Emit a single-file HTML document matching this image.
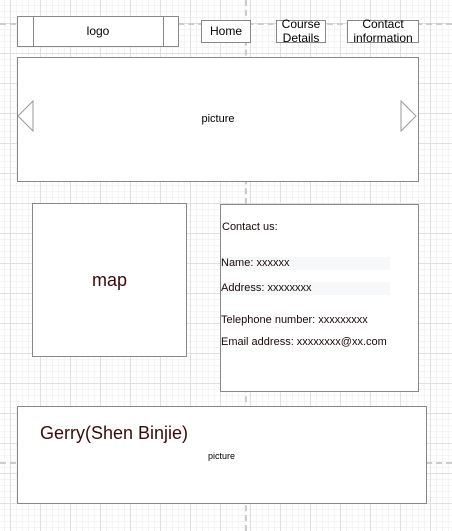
<!DOCTYPE html>
<html><head><style>
body{margin:0;width:452px;height:531px;overflow:hidden;position:relative;font-family:"Liberation Sans",Arial,sans-serif;
background-color:#fff;
background-image:
linear-gradient(to right,#e0e0e0 1px,transparent 1px),
linear-gradient(to bottom,#e0e0e0 1px,transparent 1px),
linear-gradient(to right,#f4f4f4 1px,transparent 1px),
linear-gradient(to bottom,#f4f4f4 1px,transparent 1px);
background-size:30px 30px,30px 30px,6px 6px,6px 6px;
background-position:10px 0,0 23px,4px 0,0 5px;}
.b{position:absolute;background:#fff;border:1px solid #888;box-sizing:border-box;color:#000;text-align:center;}
.dh{position:absolute;left:0;width:452px;height:0;border-top:2px dashed #ccc;}
.dv{position:absolute;top:0;height:531px;width:0;border-left:2px dashed #ccc;left:245px;}
</style></head><body>
<div class="dh" style="top:23px"></div>
<div class="dh" style="top:462px"></div>
<div class="dv"></div>
<div class="b" style="left:17px;top:16px;width:162px;height:31px;font-size:12px;line-height:29px;">logo
<div style="position:absolute;left:15px;top:0;height:29px;border-left:1px solid #888"></div>
<div style="position:absolute;left:145px;top:0;height:29px;border-left:1px solid #888"></div></div>
<div class="b" style="left:201px;top:20px;width:50px;height:23px;font-size:12px;line-height:21px;">Home</div>
<div class="b" style="left:276px;top:20px;width:50px;height:23px;font-size:12px;line-height:14px;"><div style="margin-top:-4px">Course<br>Details</div></div>
<div class="b" style="left:347px;top:20px;width:72px;height:23px;font-size:12px;line-height:14px;"><div style="margin-top:-4px">Contact<br>information</div></div>
<div class="b" style="left:17px;top:57px;width:402px;height:125px;font-size:11px;line-height:123px;">picture
<svg style="position:absolute;left:0;top:0" width="400" height="123"><polygon points="15,43 15,73 0,58" fill="#fff" stroke="#999"/><polygon points="383,43 383,73 398,58" fill="#fff" stroke="#999"/></svg></div>
<div class="b" style="left:32px;top:203px;width:155px;height:154px;font-size:18px;line-height:152px;color:#3a0a0a">map</div>
<div class="b" style="left:220px;top:204px;width:199px;height:188px;text-align:left;font-size:11px;color:#1a0808">
<div style="position:absolute;left:1px;top:16px">Contact us:</div>
<div style="position:absolute;left:0;top:52px;width:169px;height:13px;background:#f7f8fa;line-height:13px">Name: xxxxxx</div>
<div style="position:absolute;left:0;top:77px;width:169px;height:13px;background:#f7f8fa;line-height:13px">Address: xxxxxxxx</div>
<div style="position:absolute;left:0;top:109px">Telephone number: xxxxxxxxx</div>
<div style="position:absolute;left:0;top:131px">Email address: xxxxxxxx@xx.com</div>
</div>
<div class="b" style="left:17px;top:406px;width:410px;height:98px;">
<div style="position:absolute;left:22px;top:16px;font-size:18px;color:#3a0a0a">Gerry(Shen Binjie)</div>
<div style="position:absolute;left:190px;top:44px;font-size:9px">picture</div></div>
</body></html>
